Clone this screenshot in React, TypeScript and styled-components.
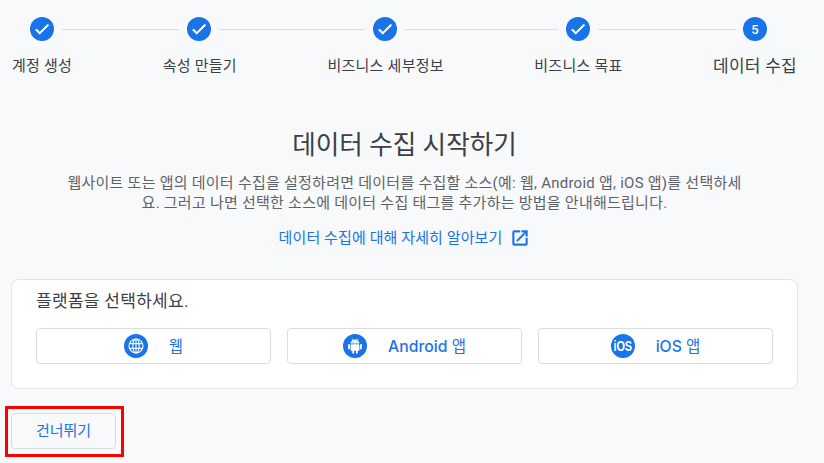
import React from "react";
import styled, { createGlobalStyle } from "styled-components";

const FONT = `Roboto, "Noto Sans CJK KR", sans-serif`;

const Global = createGlobalStyle`
  html, body { margin: 0; padding: 0; background: #f8f9fb; }
  body { font-family: ${FONT}; color: #3c4043; overflow: hidden; }
`;

const Page = styled.div`
  width: 824px;
  height: 463px;
  display: flex;
  flex-direction: column;
  background: #f8f9fb;
`;

const CircleRow = styled.div`
  display: flex;
  align-items: center;
  padding: 17px 57px 0 30px;
`;

const Circle = styled.div`
  width: 24px;
  height: 24px;
  border-radius: 50%;
  background: #1a73e8;
  color: #fff;
  flex: none;
  display: flex;
  align-items: center;
  justify-content: center;
  font-size: 13px;
  font-weight: 500;
`;

const Connector = styled.div<{ $grow: number }>`
  flex: ${(p) => p.$grow} 1 0;
  height: 1px;
  background: #dadce0;
  margin: 0 8px;
`;

const LabelRow = styled.div`
  display: flex;
  justify-content: space-between;
  align-items: center;
  padding: 13px 27px 0 12px;
  height: 24px;
`;

const StepLabel = styled.div<{ $active?: boolean }>`
  font-size: ${(p) => (p.$active ? 17 : 15)}px;
  letter-spacing: 0.25px;
  line-height: 24px;
  color: #3c4043;
  white-space: nowrap;
`;

const Intro = styled.section`
  display: flex;
  flex-direction: column;
  align-items: center;
  margin-top: 51px;
  padding-right: 15px;
`;

const Title = styled.h1`
  margin: 0;
  font-size: 25.6px;
  line-height: 32px;
  font-weight: 400;
  color: #3c4043;
`;

const Description = styled.p`
  margin: 12px 0 0;
  width: 680px;
  font-size: 15px;
  letter-spacing: 0.25px;
  line-height: 20px;
  color: #5f6368;
  text-align: center;
  word-break: break-all;
`;

const LearnLink = styled.a`
  margin-top: 15px;
  display: inline-flex;
  align-items: center;
  gap: 8px;
  font-size: 15px;
  letter-spacing: 0.1px;
  line-height: 20px;
  color: #1a73e8;
  text-decoration: none;
`;

const Card = styled.section`
  margin: 31px 26px 0 11px;
  height: 110px;
  box-sizing: border-box;
  background: #fff;
  border: 1px solid #e3e5e8;
  border-radius: 8px;
  padding: 9px 24px 0;
`;

const CardTitle = styled.div`
  font-size: 17px;
  letter-spacing: 0.3px;
  line-height: 24px;
  color: #3c4043;
`;

const Platforms = styled.div`
  display: grid;
  grid-template-columns: repeat(3, 235px);
  gap: 16px;
  margin-top: 15px;
`;

const PlatformButton = styled.button`
  height: 36px;
  box-sizing: border-box;
  background: #fff;
  border: 1px solid #dadce0;
  border-radius: 4px;
  display: flex;
  align-items: center;
  justify-content: center;
  gap: 21px;
  padding: 0;
  font-family: Inter, "Noto Sans CJK KR", sans-serif;
  font-size: 15.75px;
  font-weight: 500;
  color: #1a73e8;
`;

const PlatformName = styled.span`
  margin-bottom: 2px;
`;

const Hangul = styled.span`
  font-weight: 400;
  font-size: 15.5px;
`;

const IconDisc = styled.span`
  width: 24px;
  height: 24px;
  border-radius: 50%;
  background: #1a73e8;
  display: flex;
  align-items: center;
  justify-content: center;
  flex: none;
  color: #fff;
`;

const IosMark = styled.span`
  font-family: "Liberation Sans", sans-serif;
  font-size: 14px;
  font-weight: 700;
  letter-spacing: -0.2px;
  transform: scaleX(0.78);
`;

const Highlight = styled.div`
  align-self: flex-start;
  margin: 17px 0 0 5px;
  border: 3px solid #f00;
  padding: 4px 5px 5px 3px;
  display: flex;
`;

const SkipButton = styled.button`
  width: 105px;
  height: 36px;
  box-sizing: border-box;
  border: 1px solid #dadce0;
  border-radius: 4px;
  background: #f8f9fb;
  font-family: ${FONT};
  font-size: 15px;
  color: #1a73e8;
  padding: 0 0 3px;
`;

const Check = () => (
  <svg width="18" height="18" viewBox="0 0 24 24" fill="#fff" aria-hidden>
    <path d="M9 16.17 4.83 12l-1.41 1.41L9 19 21 7l-1.41-1.41z" stroke="#fff" strokeWidth="1" />
  </svg>
);

const ExternalIcon = () => (
  <svg width="20" height="20" viewBox="0 0 24 24" fill="#1a73e8" stroke="#1a73e8" strokeWidth="0.5" aria-hidden>
    <path d="M19 19H5V5h7V3H5a2 2 0 0 0-2 2v14a2 2 0 0 0 2 2h14c1.1 0 2-.9 2-2v-7h-2v7zM14 3v2h3.59l-9.83 9.83 1.41 1.41L19 6.41V10h2V3h-7z" />
  </svg>
);

const GlobeIcon = () => (
  <svg width="18" height="18" viewBox="0 0 18 18" fill="none" stroke="#fff" strokeWidth="1.1" aria-hidden>
    <circle cx="9" cy="9" r="7" />
    <ellipse cx="9" cy="9" rx="3.2" ry="7" />
    <path d="M2.2 6.6h13.6M2.2 11.4h13.6M9 2v14" />
  </svg>
);

const AndroidIcon = () => (
  <svg width="18" height="18" viewBox="0 0 18 18" fill="#fff" aria-hidden>
    <path d="M4.6 6.6a4.4 4.1 0 0 1 8.8 0z" />
    <path d="m6 1.4 1.1 1.8M12 1.4l-1.1 1.8" stroke="#fff" strokeWidth="0.7" />
    <rect x="4.6" y="7.2" width="8.8" height="6.6" rx="0.9" />
    <rect x="2.1" y="7.1" width="1.8" height="5.2" rx="0.9" />
    <rect x="14.1" y="7.1" width="1.8" height="5.2" rx="0.9" />
    <rect x="6.3" y="12.5" width="1.8" height="4.2" rx="0.9" />
    <rect x="9.9" y="12.5" width="1.8" height="4.2" rx="0.9" />
    <circle cx="7.2" cy="4.9" r="0.5" fill="#1a73e8" />
    <circle cx="10.8" cy="4.9" r="0.5" fill="#1a73e8" />
  </svg>
);

const steps = ["계정 생성", "속성 만들기", "비즈니스 세부정보", "비즈니스 목표", "데이터 수집"];
const spans = [117, 146, 153, 137];

export default function App() {
  return (
    <Page>
      <Global />
      <CircleRow>
        {steps.map((s, i) => (
          <React.Fragment key={s}>
            <Circle>{i < 4 ? <Check /> : "5"}</Circle>
            {i < 4 && <Connector $grow={spans[i]} />}
          </React.Fragment>
        ))}
      </CircleRow>
      <LabelRow>
        {steps.map((s, i) => (
          <StepLabel key={s} $active={i === 4}>{s}</StepLabel>
        ))}
      </LabelRow>
      <Intro>
        <Title>데이터 수집 시작하기</Title>
        <Description>
          웹사이트 또는 앱의 데이터 수집을 설정하려면 데이터를 수집할 소스(예: 웹, Android 앱, iOS 앱)를 선택하세요. 그러고 나면 선택한 소스에 데이터 수집 태그를 추가하는 방법을 안내해드립니다.
        </Description>
        <LearnLink href="#">
          데이터 수집에 대해 자세히 알아보기
          <ExternalIcon />
        </LearnLink>
      </Intro>
      <Card>
        <CardTitle>플랫폼을 선택하세요.</CardTitle>
        <Platforms>
          <PlatformButton>
            <IconDisc><GlobeIcon /></IconDisc>
            <PlatformName><Hangul>웹</Hangul></PlatformName>
          </PlatformButton>
          <PlatformButton>
            <IconDisc><AndroidIcon /></IconDisc>
            <PlatformName>Android <Hangul>앱</Hangul></PlatformName>
          </PlatformButton>
          <PlatformButton>
            <IconDisc><IosMark>iOS</IosMark></IconDisc>
            <PlatformName>iOS <Hangul>앱</Hangul></PlatformName>
          </PlatformButton>
        </Platforms>
      </Card>
      <Highlight>
        <SkipButton>건너뛰기</SkipButton>
      </Highlight>
    </Page>
  );
}
